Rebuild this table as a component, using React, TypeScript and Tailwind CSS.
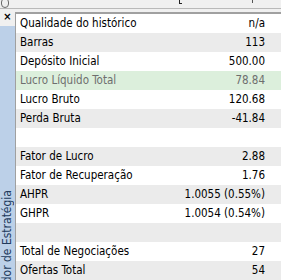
import React from "react";

type Row = { label: string; value: string; tone: "white" | "gray" | "green" };

const rows: Row[] = [
  { label: "Qualidade do histórico", value: "n/a", tone: "white" },
  { label: "Barras", value: "113", tone: "gray" },
  { label: "Depósito Inicial", value: "500.00", tone: "white" },
  { label: "Lucro Líquido Total", value: "78.84", tone: "green" },
  { label: "Lucro Bruto", value: "120.68", tone: "white" },
  { label: "Perda Bruta", value: "-41.84", tone: "gray" },
  { label: "", value: "", tone: "white" },
  { label: "Fator de Lucro", value: "2.88", tone: "gray" },
  { label: "Fator de Recuperação", value: "1.76", tone: "white" },
  { label: "AHPR", value: "1.0055 (0.55%)", tone: "gray" },
  { label: "GHPR", value: "1.0054 (0.54%)", tone: "white" },
  { label: "", value: "", tone: "gray" },
  { label: "Total de Negociações", value: "27", tone: "white" },
  { label: "Ofertas Total", value: "54", tone: "gray" },
];

function StatRow({ row }: { row: Row }) {
  const bg =
    row.tone === "gray" ? "bg-[#ebebeb]" : row.tone === "green" ? "bg-[#dcefdc]" : "bg-white";
  const text = row.tone === "green" ? "text-[#6e6e6e]" : "text-black";
  return (
    <div className={`flex h-[19px] shrink-0 items-center justify-between pl-[4px] pr-[16px] ${bg} ${text}`}>
      <span>{row.label}</span>
      <span>{row.value}</span>
    </div>
  );
}

export default function App() {
  return (
    <div
      className="flex h-[280px] w-[281px] flex-col overflow-hidden bg-[#f0f0f0] text-[11.5px] leading-none"
      style={{ fontFamily: '"DejaVu Sans Condensed", "Liberation Sans", sans-serif' }}
    >
      {/* clipped toolbar above */}
      <div className="flex h-[8px] shrink-0 items-end overflow-hidden">
        <div className="ml-[1px] h-[10px] w-[8px] rounded-full border border-[#6b6b6b]" />
        <div className="ml-[170px] mb-[4px] h-[5px] w-[3px] border-b border-l border-[#222]" />
        <div className="ml-[70px] mb-[5px] h-[3px] w-px bg-[#555]" />
      </div>
      <div className="h-px shrink-0 bg-[#b9b9b9]" />

      <div className="flex min-h-0 flex-1">
        {/* side tab */}
        <div className="flex w-[15px] shrink-0 flex-col">
          <div className="flex h-[17px] shrink-0 items-center justify-center pb-[2px] text-[11px] font-bold text-black">
            ×
          </div>
          <div className="flex min-h-0 flex-1 flex-col justify-end overflow-hidden bg-[#bcd0e8]">
            <span className="mb-[-31px] ml-[1px] rotate-180 whitespace-nowrap text-[12px] text-[#213a5c] [writing-mode:vertical-rl]">
              Testador de Estratégia
            </span>
          </div>
        </div>

        {/* stats table */}
        <div className="mt-[3px] flex min-w-0 flex-1 flex-col border-l border-t-2 border-[#a0a0a0] bg-white">
          {rows.map((row, i) => (
            <StatRow key={i} row={row} />
          ))}
        </div>
      </div>
    </div>
  );
}
